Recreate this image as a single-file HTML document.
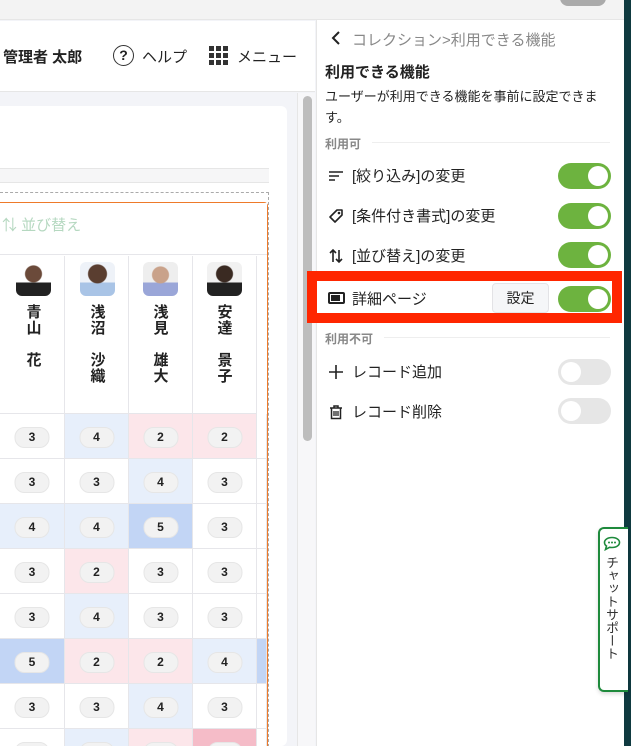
<!DOCTYPE html><html style="overflow:hidden"><head><meta charset="utf-8"><style>
*{box-sizing:border-box;margin:0;padding:0}
html,body{width:631px;height:746px;overflow:hidden}
body{position:relative;background:#f3f4f8;font-family:"Liberation Sans","Noto Sans CJK JP",sans-serif;color:#222}
.a{position:absolute}
.tog{position:absolute;left:558px;width:53px;height:26px;border-radius:13px;background:#6db33f}
.tog::after{content:"";position:absolute;right:3px;top:3px;width:20px;height:20px;border-radius:50%;background:#fff}
.tog.off{background:#e6e6e6}.tog.off::after{left:3px;right:auto}
.row{position:absolute;left:328px;font-size:15px;display:flex;align-items:center;gap:8px}
.cell{position:absolute;height:45px;border-right:1px solid #e6e6ea;border-bottom:1px solid #e6e6ea}
.pill{position:absolute;left:50%;top:13px;transform:translateX(-50%);width:35px;height:21px;border-radius:10px;background:#f2f2f2;border:1px solid #e6e6e6;font-size:12px;font-weight:bold;text-align:center;line-height:19px}
.nm{position:absolute;width:20px;font-size:15px;font-weight:bold;line-height:16px;text-align:center}
</style></head><body>
<div class="a" style="left:0;top:0;width:631px;height:20px;background:#f3f3f3;border-bottom:1px solid #e6e6e6"></div>
<div class="a" style="left:560px;top:-10px;width:46px;height:16px;border-radius:8px;background:#aaa"></div>
<div class="a" style="left:0;top:21px;width:315px;height:71px;background:#fff;border-bottom:1px solid #e6e6e6"></div>
<div class="a" style="left:3px;top:46px;font-size:15px;font-weight:bold">管理者 太郎</div>
<div class="a" style="left:113px;top:45px;width:21px;height:21px;border:1.5px solid #333;border-radius:50%;font-size:14px;text-align:center;line-height:18px;font-weight:bold">?</div>
<div class="a" style="left:142px;top:46px;font-size:15px">ヘルプ</div>
<svg class="a" style="left:209px;top:46px" width="19" height="19"><g fill="#333"><rect x="0" y="0" width="5" height="5"/><rect x="7" y="0" width="5" height="5"/><rect x="14" y="0" width="5" height="5"/><rect x="0" y="7" width="5" height="5"/><rect x="7" y="7" width="5" height="5"/><rect x="14" y="7" width="5" height="5"/><rect x="0" y="14" width="5" height="5"/><rect x="7" y="14" width="5" height="5"/><rect x="14" y="14" width="5" height="5"/></g></svg>
<div class="a" style="left:237px;top:46px;font-size:15px">メニュー</div>
<div class="a" style="left:-10px;top:106px;width:297px;height:640px;background:#fff;border-radius:6px"></div>
<div class="a" style="left:0;top:168px;width:269px;height:15px;background:#f6f6f7;border-top:1px solid #e6e6e6;border-bottom:1px solid #e6e6e6"></div>
<div class="a" style="left:-5px;top:192px;width:274px;height:560px;border:1px dashed #aaa"></div>
<div class="a" style="left:-5px;top:202px;width:273px;height:560px;border:1px solid #ee7a2a;border-radius:4px"></div>
<div class="a" style="left:0;top:203px;width:267px;height:52px;background:#fff;border-bottom:1px solid #e6e6ea"></div>
<div class="a" style="left:2px;top:214px;font-size:15px;color:#b5d8c0">⇅ 並び替え</div>
<div class="a" style="left:0;top:256px;width:267px;height:158px;background:#fff"></div>
<div class="cell" style="left:0;top:256px;width:65px;height:158px"></div><div class="cell" style="left:65px;top:256px;width:64px;height:158px"></div><div class="cell" style="left:129px;top:256px;width:64px;height:158px"></div><div class="cell" style="left:193px;top:256px;width:64px;height:158px"></div>
<div class="a" style="left:16px;top:262px;width:35px;height:34px;border-radius:6px;background:radial-gradient(circle at 50% 35%,#6b4a3a 0 8px,transparent 9px),linear-gradient(#fff 60%,#222 60%)"></div>
<div class="a" style="left:80px;top:262px;width:35px;height:34px;border-radius:6px;background:radial-gradient(circle at 50% 35%,#5a3e30 0 9px,transparent 10px),linear-gradient(#eef2f8 60%,#a9c4e6 60%)"></div>
<div class="a" style="left:143px;top:262px;width:35px;height:34px;border-radius:6px;background:radial-gradient(circle at 50% 38%,#c9a28a 0 8px,transparent 9px),linear-gradient(#eee 60%,#9aa6d8 60%)"></div>
<div class="a" style="left:207px;top:262px;width:35px;height:34px;border-radius:6px;background:radial-gradient(circle at 50% 35%,#3a2a22 0 8px,transparent 9px),linear-gradient(#f1f1f1 60%,#222 60%)"></div>
<div class="nm" style="left:24px;top:305px">青<br>山<br><br>花</div>
<div class="nm" style="left:88px;top:305px">浅<br>沼<br><br>沙<br>織</div>
<div class="nm" style="left:151px;top:305px">浅<br>見<br><br>雄<br>大</div>
<div class="nm" style="left:215px;top:305px">安<br>達<br><br>景<br>子</div>
<div id="g"></div>
<script>
var W='#fff',B='#e7effb',D='#c2d5f5',P='#fce6ea',Q='#f5bcc8';
var data=[[[W,3],[B,4],[P,2],[P,2]],[[W,3],[W,3],[B,4],[W,3]],[[B,4],[B,4],[D,5],[W,3]],[[W,3],[P,2],[W,3],[W,3]],[[W,3],[B,4],[W,3],[W,3]],[[D,5],[P,2],[P,2],[B,4]],[[W,3],[W,3],[B,4],[W,3]],[[W,3],[B,3],[P,3],[Q,3]]];
var xs=[0,65,129,193,257],h='';
data.forEach(function(r,i){var y=414+i*45;r.forEach(function(c,j){h+='<div class="cell" style="left:'+xs[j]+'px;top:'+y+'px;width:'+(xs[j+1]-xs[j])+'px;background:'+c[0]+'"><div class="pill">'+c[1]+'</div></div>';});
h+='<div class="cell" style="left:257px;top:'+y+'px;width:10px;background:'+(i==5?D:W)+'"></div>';});
document.getElementById('g').innerHTML=h;
</script>
<div class="a" style="left:297px;top:93px;width:18px;height:660px;background:#f7f7f9;border-left:1px solid #e6e6e6"></div>
<div class="a" style="left:303px;top:96px;width:9px;height:345px;border-radius:5px;background:#bdbdbd"></div>
<div class="a" style="left:316px;top:20px;width:308px;height:726px;background:#fff;border-left:1px solid #e6e6e6"></div>
<div class="a" style="left:624px;top:0;width:7px;height:746px;background:#0f3a40"></div>
<svg class="a" style="left:330px;top:30px" width="12" height="16"><path d="M9 2 L3 8 L9 14" fill="none" stroke="#222" stroke-width="2"/></svg>
<div class="a" style="left:352px;top:29px;font-size:15px;color:#888">コレクション&gt;利用できる機能</div>
<div class="a" style="left:325px;top:61px;font-size:15px;font-weight:bold">利用できる機能</div>
<div class="a" style="left:325px;top:86px;width:290px;font-size:13px;line-height:21px">ユーザーが利用できる機能を事前に設定できます。</div>
<div class="a" style="left:325px;top:135px;font-size:12px;color:#888;font-weight:bold">利用可</div>
<div class="a" style="left:372px;top:142px;width:238px;height:1px;background:#eee"></div>
<div class="row" style="top:165px"><svg width="16" height="16"><path d="M1 4H15M1 8H11M1 12H7" stroke="#222" stroke-width="1.5"/></svg>[絞り込み]の変更</div><div class="tog" style="top:163px"></div>
<div class="row" style="top:205px"><svg width="16" height="16"><path d="M2 9 L9 2 H14 V7 L7 14 Z" fill="none" stroke="#222" stroke-width="1.6" stroke-linejoin="round"/><circle cx="11" cy="5" r="1.3" fill="#222"/></svg>[条件付き書式]の変更</div><div class="tog" style="top:203px"></div>
<div class="row" style="top:245px"><svg width="16" height="16"><path d="M5 14V2M2 5L5 2L8 5M11 2V14M8 11L11 14L14 11" fill="none" stroke="#222" stroke-width="1.6"/></svg>[並び替え]の変更</div><div class="tog" style="top:242px"></div>
<div class="a" style="left:307px;top:271px;width:315px;height:52px;border:10px solid #ff2600"></div>
<div class="a" style="left:328px;top:292px;width:17px;height:12px;border:2px solid #222;border-radius:2px"><div style="margin:1px;width:9px;height:6px;background:#222"></div></div>
<div class="row" style="top:288px;left:352px">詳細ページ</div>
<div class="a" style="left:492px;top:283px;width:57px;height:30px;background:#f5f6f8;border:1px solid #e3e3e6;border-radius:4px;font-size:14px;text-align:center;line-height:28px">設定</div>
<div class="tog" style="top:286px"></div>
<div class="a" style="left:325px;top:330px;font-size:12px;color:#888;font-weight:bold">利用不可</div>
<div class="a" style="left:384px;top:337px;width:226px;height:1px;background:#eee"></div>
<div class="row" style="top:361px"><svg width="16" height="16"><path d="M8 1V15M1 8H15" stroke="#222" stroke-width="1.6"/></svg>レコード追加</div><div class="tog off" style="top:359px"></div>
<div class="row" style="top:401px"><svg width="16" height="16"><path d="M2 4H14M6 4V2H10V4M3.5 4V14.5H12.5V4" fill="none" stroke="#222" stroke-width="1.5"/><path d="M6 7V12M8 7V12M10 7V12" stroke="#222" stroke-width="1.3"/></svg>レコード削除</div><div class="tog off" style="top:398px"></div>
<div class="a" style="left:598px;top:527px;width:30px;height:165px;background:#fff;border:2px solid #1e8a3c;border-right:none;border-radius:6px 0 0 6px;box-shadow:0 2px 4px rgba(0,0,0,.15)"></div>
<svg class="a" style="left:603px;top:536px" width="18" height="15"><path d="M9 1.5C4.5 1.5 1.5 3.8 1.5 6.5C1.5 8 2.3 9.2 3.5 10L2.5 13.5L6.5 11.3C7.3 11.5 8.1 11.5 9 11.5C13.5 11.5 16.5 9.2 16.5 6.5C16.5 3.8 13.5 1.5 9 1.5Z" fill="none" stroke="#1e8a3c" stroke-width="1.6"/><circle cx="6" cy="6.5" r="1" fill="#1e8a3c"/><circle cx="9" cy="6.5" r="1" fill="#1e8a3c"/><circle cx="12" cy="6.5" r="1" fill="#1e8a3c"/></svg>
<div class="a" style="left:605px;top:556px;width:14px;font-size:13px;line-height:15px;writing-mode:vertical-rl;color:#333">チャットサポート</div>
</body></html>
